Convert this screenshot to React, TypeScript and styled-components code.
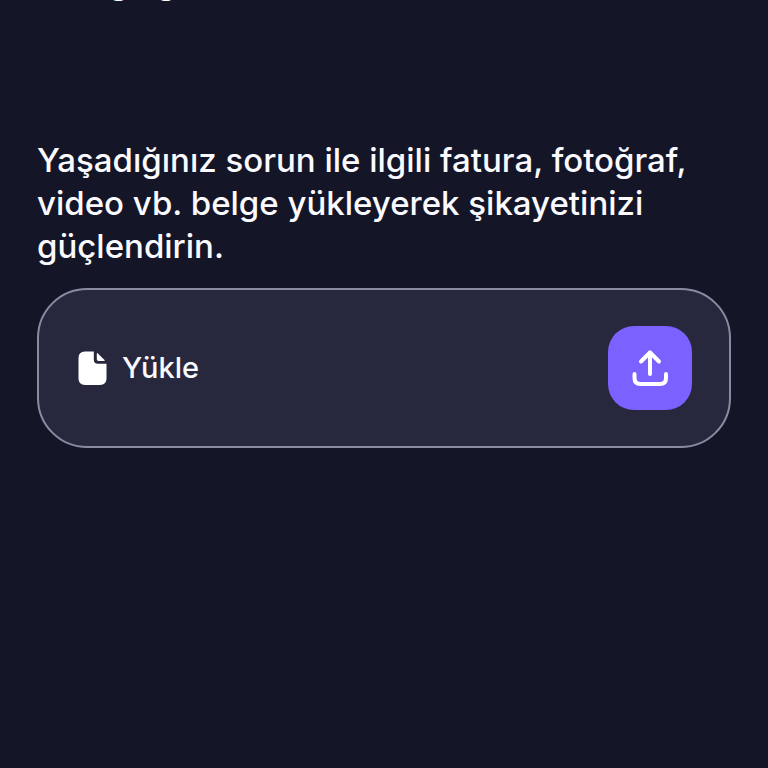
import React from "react";
import styled, { createGlobalStyle } from "styled-components";

const GlobalStyle = createGlobalStyle`
  *, *::before, *::after { box-sizing: border-box; }
  body { margin: 0; background: #141527; }
`;

const Page = styled.main`
  min-height: 100vh;
  padding: 0 37px;
  background: #141527;
  color: #fafaff;
  font-family: "Inter", "Open Sans", sans-serif;
  font-weight: 500;
`;

const ScrolledLine = styled.div`
  display: flex;
  align-items: flex-end;
  height: 1px;
  margin-bottom: 138px;
  overflow: hidden;
  font-size: 32px;
  line-height: 36px;
`;

const Field = styled.section`
  display: flex;
  flex-direction: column;
  gap: 20px;
`;

const Title = styled.h2`
  margin: 0;
  font-size: 33px;
  font-weight: 500;
  line-height: 43px;
`;

const UploadCard = styled.div`
  display: flex;
  align-items: center;
  justify-content: space-between;
  padding: 36px 37px;
  border: 2px solid #8b8aa3;
  border-radius: 50px;
  background: #27283e;
`;

const FileLabel = styled.label`
  display: flex;
  align-items: center;
  gap: 14px;
  font-size: 29px;
  line-height: 36px;
`;

const UploadButton = styled.button`
  display: grid;
  place-items: center;
  width: 84px;
  height: 84px;
  padding: 0;
  border: 0;
  border-radius: 26px;
  background: #7b61ff;
  color: #ffffff;
  cursor: pointer;
`;

const FileIcon = () => (
  <svg width="32" height="36" viewBox="0 0 32 36" fill="#ffffff" aria-hidden="true">
    <path d="M9 1.500H17.800V9.500Q17.800 13.800 22 13.800H30.500V28.500Q30.500 35 24 35H9Q2.500 35 2.500 28.500V8Q2.500 1.500 9 1.500Z" />
    <path d="M20.800 4Q20.800 2.500 21.900 3.500L28.500 10Q29.300 11 28 11H22.500Q20.800 11 20.800 9.300Z" />
  </svg>
);

const UploadIcon = () => (
  <svg
    width="40"
    height="40"
    viewBox="0 0 40 40"
    fill="none"
    stroke="currentColor"
    strokeWidth="4"
    strokeLinecap="round"
    strokeLinejoin="round"
    aria-hidden="true"
  >
    <path d="M20 26V4.500" />
    <path d="M11 13.500L20 4.500L29 13.500" />
    <path d="M4.500 26V30Q4.500 36 10.500 36H30Q36 36 36 30V26" />
  </svg>
);

export default function App() {
  return (
    <>
      <GlobalStyle />
      <Page>
        <ScrolledLine>Olduğu gibi</ScrolledLine>
        <Field>
          <Title>
            Yaşadığınız sorun ile ilgili fatura, fotoğraf, video vb. belge yükleyerek şikayetinizi güçlendirin.
          </Title>
          <UploadCard>
            <FileLabel htmlFor="upload">
              <FileIcon />
              Yükle
            </FileLabel>
            <UploadButton id="upload" type="button">
              <UploadIcon />
            </UploadButton>
          </UploadCard>
        </Field>
      </Page>
    </>
  );
}
